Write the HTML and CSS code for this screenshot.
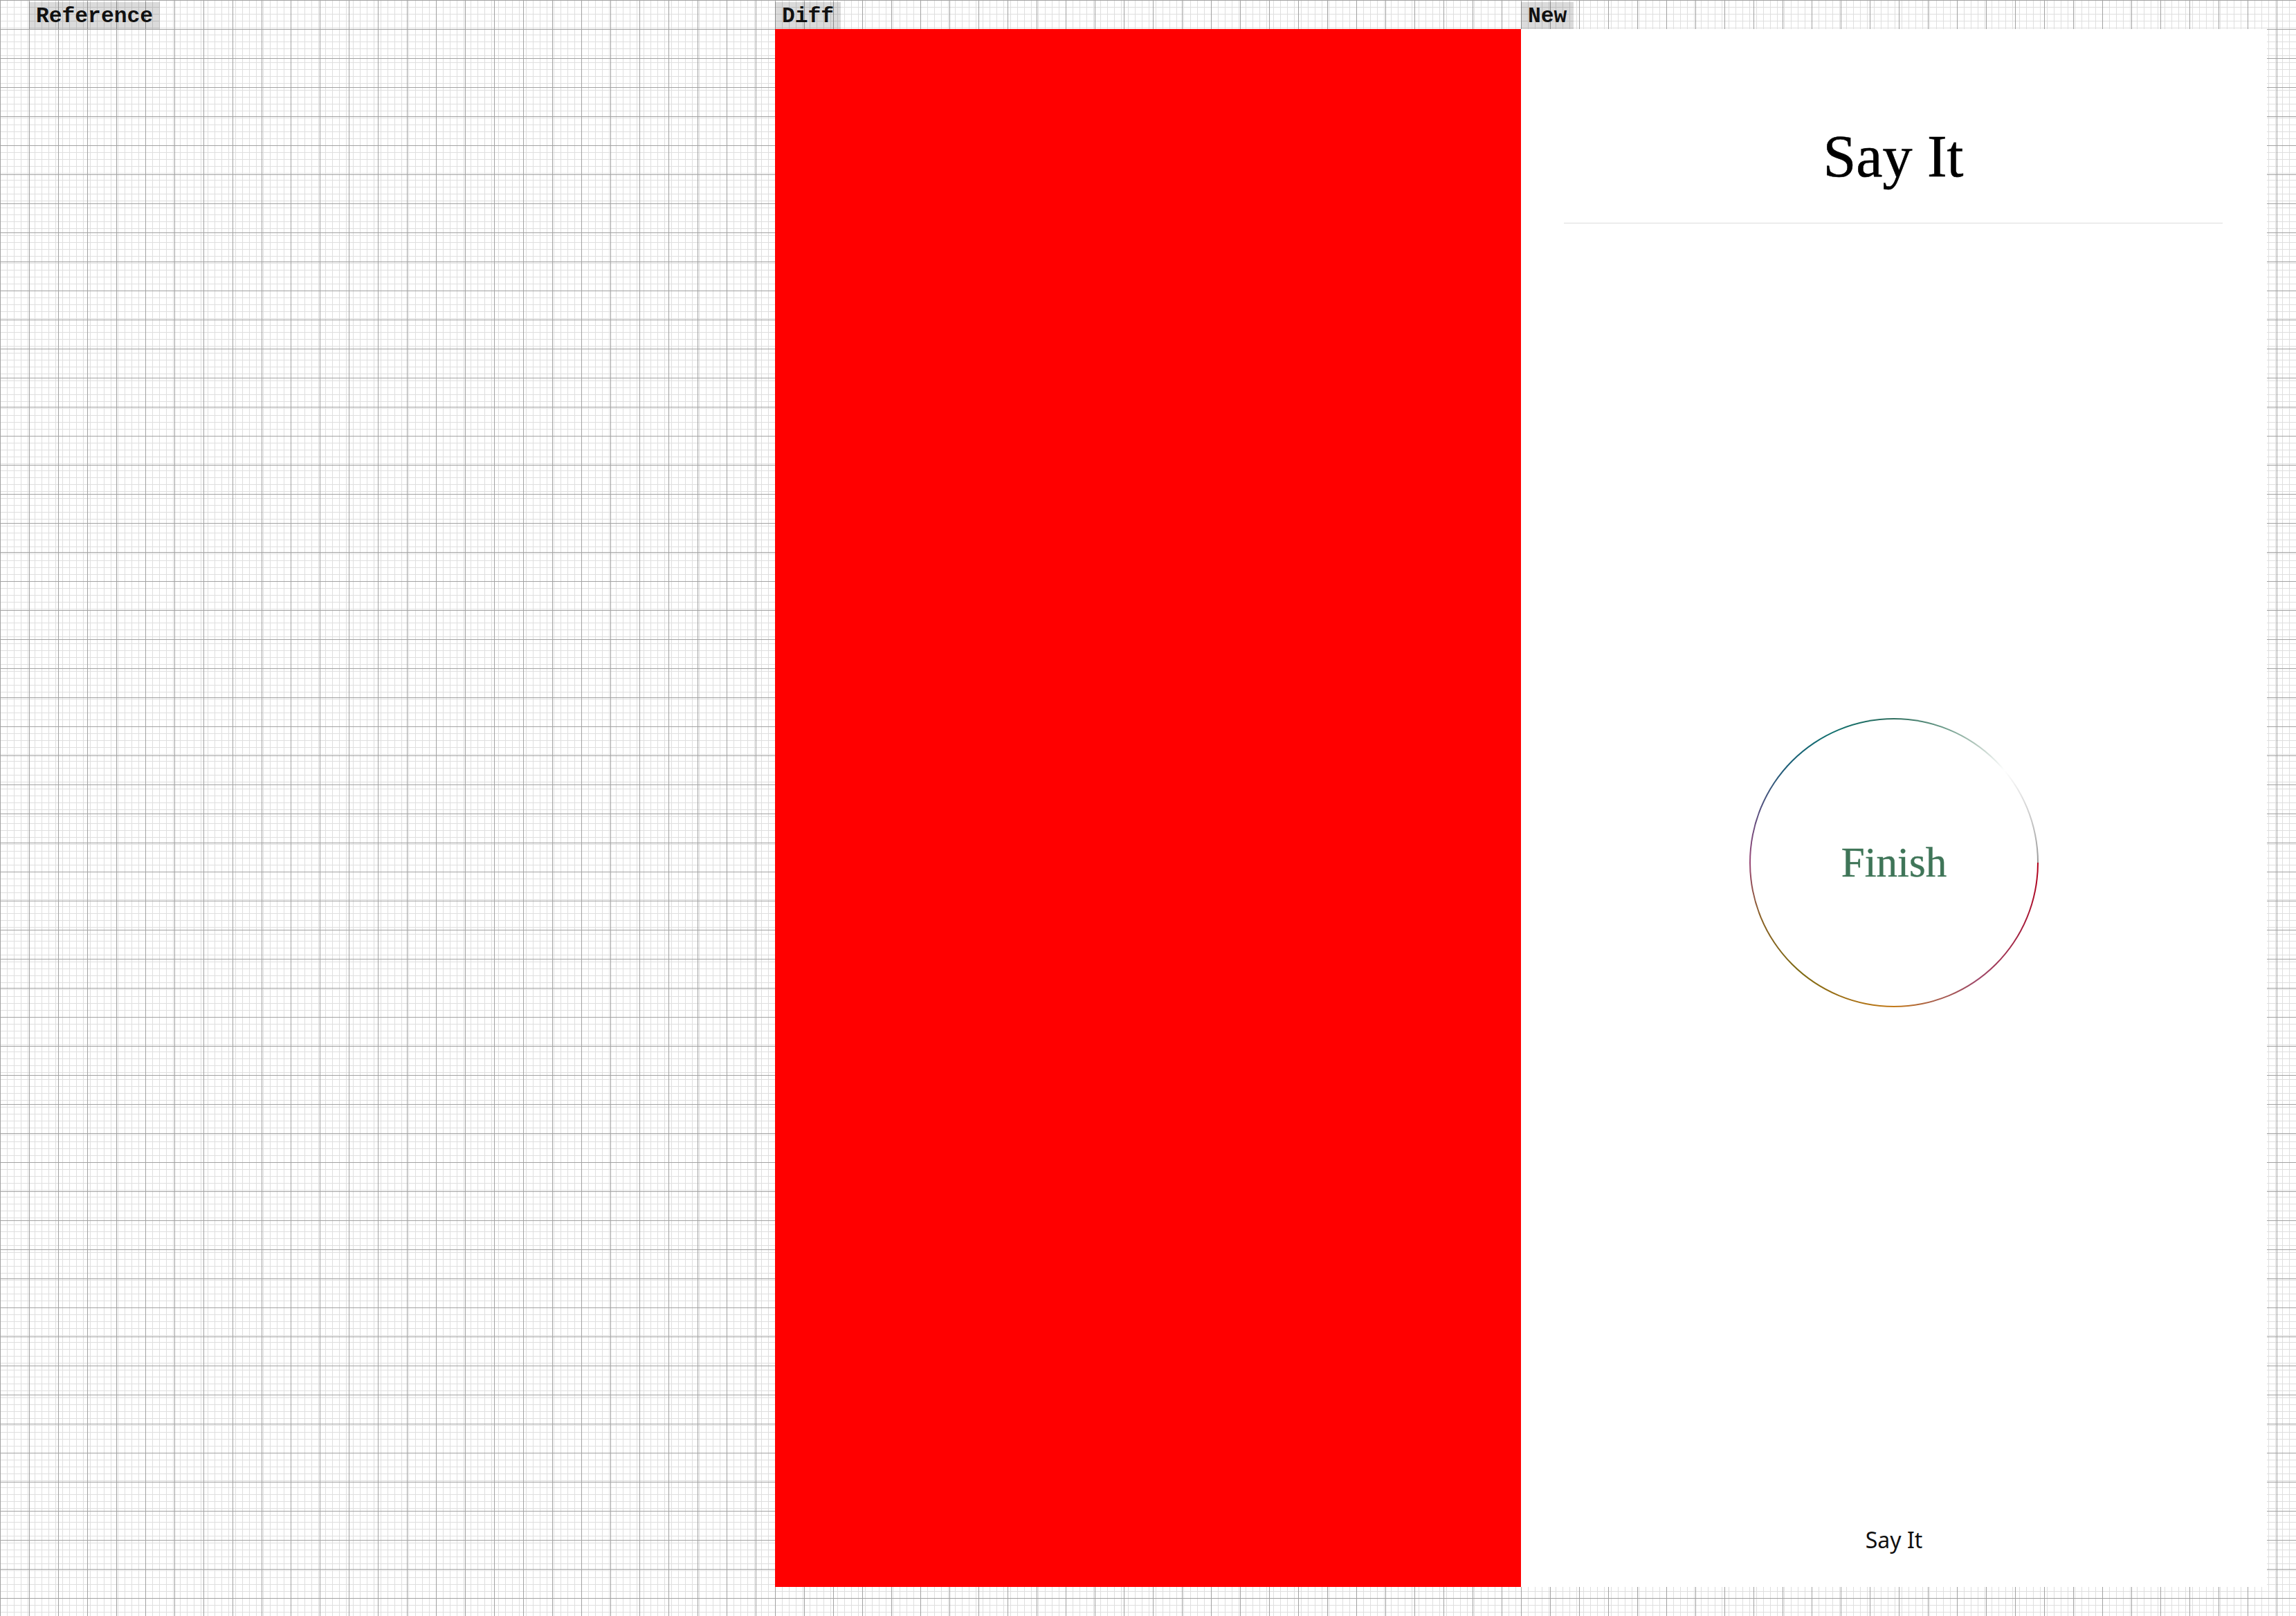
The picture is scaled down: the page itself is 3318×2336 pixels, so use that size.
FILE: index.html
```html
<!DOCTYPE html>
<html lang="en">
<head>
<meta charset="utf-8">
<title>Say It – comparison</title>
<link rel="stylesheet" href="styles.css">
</head>
<body>
<div class="board">
  <section class="col col-ref">
    <div class="label">Reference</div>
    <div class="panel panel-empty"></div>
  </section>
  <section class="col col-diff grid">
    <div class="label">Diff</div>
    <div class="panel panel-diff"></div>
  </section>
  <section class="col col-new grid">
    <div class="label">New</div>
    <div class="panel panel-new">
      <header class="app-header">
        <h1 class="app-title">Say It</h1>
      </header>
      <main class="app-main">
        <div class="ring">
          <div class="ring-inner">
            <span class="finish">Finish</span>
          </div>
        </div>
      </main>
      <footer class="app-footer">Say It</footer>
    </div>
  </section>
</div>
</body>
</html>
```

FILE: styles.css
```css
html, body {
  margin: 0;
  padding: 0;
}

body {
  width: 3318px;
  height: 2336px;
  overflow: hidden;
  background-color: #ffffff;
  background-image:
    linear-gradient(to right, #a2a2a2 1px, transparent 1px),
    linear-gradient(to bottom, #a2a2a2 1px, transparent 1px),
    linear-gradient(to right, #dfdfdf 1px, transparent 1px),
    linear-gradient(to bottom, #dfdfdf 1px, transparent 1px);
  background-size: 42px 42px, 42px 42px, 10px 10px, 10px 10px;
}

.grid {
  background-color: #ffffff;
  background-image:
    linear-gradient(to right, #a2a2a2 1px, transparent 1px),
    linear-gradient(to bottom, #a2a2a2 1px, transparent 1px),
    linear-gradient(to right, #dfdfdf 1px, transparent 1px),
    linear-gradient(to bottom, #dfdfdf 1px, transparent 1px);
  background-size: 42px 42px, 42px 42px, 10px 10px, 10px 10px;
}

.board {
  display: flex;
  height: 2336px;
  padding-left: 42px;
  box-sizing: border-box;
}

.col {
  display: flex;
  flex-direction: column;
  width: 1078px;
  flex: none;
  padding-top: 3px;
  box-sizing: border-box;
}

.col-new {
  width: 1120px;
  padding-right: 42px;
}

.label {
  align-self: flex-start;
  height: 39px;
  box-sizing: border-box;
  padding: 2px 10px 0 10px;
  background: rgba(0, 0, 0, 0.14);
  font-family: "Liberation Mono", "Courier New", monospace;
  font-weight: bold;
  font-size: 31.3px;
  line-height: 37px;
  color: #111111;
  white-space: nowrap;
}

.panel {
  height: 2252px;
  width: 1078px;
  flex: none;
}

.panel-diff {
  background: #ff0000;
}

.panel-new {
  background: #ffffff;
  display: flex;
  flex-direction: column;
}

.app-header {
  padding: 141px 0 53px;
  margin: 0 64px 0 62px;
  border-bottom: 1px solid #dcdcdc;
}

.app-title {
  margin: 0;
  text-align: center;
  font-family: "Liberation Serif", "Times New Roman", serif;
  font-weight: normal;
  font-size: 86px;
  line-height: 1;
  color: #000000;
  -webkit-text-stroke: 0.6px #000000;
}

.app-main {
  flex: 1;
  display: flex;
  align-items: center;
  justify-content: center;
}

.ring {
  width: 418px;
  height: 418px;
  box-sizing: border-box;
  padding: 2px;
  border-radius: 50%;
  background: conic-gradient(from 90deg,
    #b3001b 0deg,
    #a5203f 28deg,
    #a04a6a 55deg,
    #aa6048 75deg,
    #c37a18 90deg,
    #a06f15 110deg,
    #7d6a12 130deg,
    #8a6025 158deg,
    #9a4878 180deg,
    #5a5080 200deg,
    #1b5e78 222deg,
    #10706e 245deg,
    #2f6e5e 270deg,
    #6a9a88 290deg,
    #b5c9bf 305deg,
    #ffffff 320deg,
    #cfcfcf 340deg,
    #999999 360deg);
}

.ring-inner {
  width: 100%;
  height: 100%;
  border-radius: 50%;
  background: #ffffff;
  display: flex;
  align-items: center;
  justify-content: center;
}

.finish {
  font-family: "Liberation Serif", "Times New Roman", serif;
  font-size: 61px;
  line-height: 1;
  color: #3f7558;
  -webkit-text-stroke: 0.4px #3f7558;
}

.app-footer {
  height: 124px;
  box-sizing: border-box;
  padding-top: 40px;
  text-align: center;
  font-family: "Noto Sans", "Liberation Sans", sans-serif;
  font-size: 32px;
  line-height: 1;
  color: #111111;
}
```
